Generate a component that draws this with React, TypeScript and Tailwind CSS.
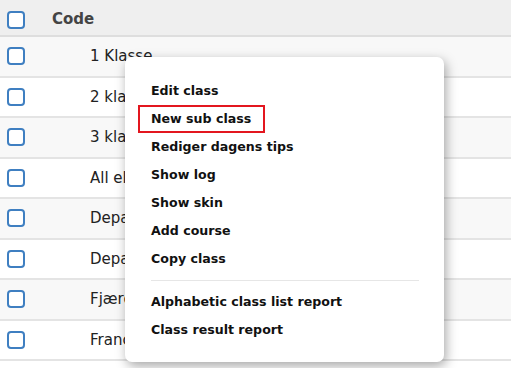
const rows = [
  "1 Klasse",
  "2 klasse",
  "3 klasse",
  "All elever",
  "Department A",
  "Department B",
  "Fjærde klasse",
  "Franck klasse",
];

const menuTop = ["Edit class", "New sub class", "Rediger dagens tips", "Show log", "Show skin", "Add course", "Copy class"];
const menuBottom = ["Alphabetic class list report", "Class result report"];

function Checkbox() {
  return <span className="block w-[18px] h-[18px] rounded-[4px] border-2 border-[#3f7fc1] bg-white" />;
}

export default function App() {
  return (
    <div className="relative w-[511px] h-[368px] overflow-hidden bg-white font-['DejaVu_Sans',Verdana,sans-serif]">
      {/* table */}
      <div className="flex flex-col">
        <div className="flex items-center h-[37px] pt-[4px] bg-[#efefef] border-b-2 border-[#dedede]">
          <div className="w-[52px] pl-[7px]">
            <Checkbox />
          </div>
          <span className="text-[15px] font-bold text-[#444]">Code</span>
        </div>
        {rows.map((r, i) => (
          <div
            key={r}
            className={
              "flex items-center h-[40.5px] border-b-2 border-[#e4e4e4] " +
              (i % 2 === 0 ? "bg-[#f8f8f8]" : "bg-white")
            }
          >
            <div className="w-[90px] pl-[7px]">
              <Checkbox />
            </div>
            <span className="text-[15px] text-[#222]">{r}</span>
          </div>
        ))}
      </div>

      {/* context menu */}
      <div className="absolute left-[125px] top-[57px] w-[319px] h-[305px] bg-white rounded-[7px] shadow-[2px_4px_12px_rgba(0,0,0,0.35)] pt-[20px] px-[13px]">
        <ul className="flex flex-col">
          {menuTop.map((m, i) => (
            <li
              key={m}
              className={
                "h-[28px] flex items-center text-[12.6px] font-bold text-[#111] " +
                (i === 1 ? "border-2 border-[#e3161f] w-[127px] pl-[11px]" : "pl-[13px]")
              }
            >
              {m}
            </li>
          ))}
        </ul>
        <div className="ml-[13px] mr-[12px] my-[7px] h-px bg-[#e6e6e6]" />
        <ul className="flex flex-col">
          {menuBottom.map((m) => (
            <li key={m} className="h-[28px] flex items-center pl-[13px] text-[12.6px] font-bold text-[#111]">
              {m}
            </li>
          ))}
        </ul>
      </div>
    </div>
  );
}
